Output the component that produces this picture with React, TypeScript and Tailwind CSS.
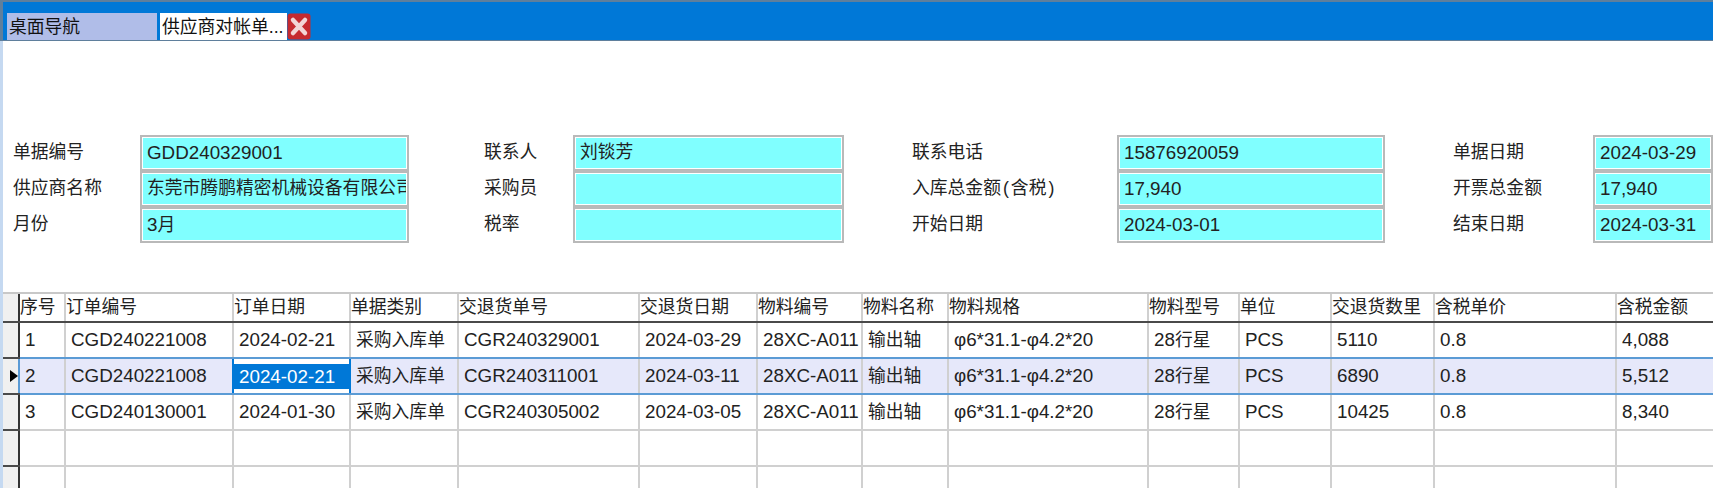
import React from 'react'

const font = { fontFamily: '"Liberation Sans", "Noto Sans CJK SC", sans-serif' }

// form rows: label / value pairs, four across
const formRows = [
    [['单据编号', 'GDD240329001'], ['联系人', '刘锬芳'], ['联系电话', '15876920059'], ['单据日期', '2024-03-29']],
    [['供应商名称', '东莞市腾鹏精密机械设备有限公司'], ['采购员', ''], ['入库总金额(含税)', '17,940'], ['开票总金额', '17,940']],
    [['月份', '3月'], ['税率', ''], ['开始日期', '2024-03-01'], ['结束日期', '2024-03-31']],
]

const columns = ['序号', '订单编号', '订单日期', '单据类别', '交退货单号', '交退货日期', '物料编号', '物料名称', '物料规格', '物料型号', '单位', '交退货数里', '含税单价', '含税金额']
const widths = [46, 168, 117, 108, 181, 118, 105, 86, 200, 91, 92, 103, 182, 97]

const rows = [
    ['1', 'CGD240221008', '2024-02-21', '采购入库单', 'CGR240329001', '2024-03-29', '28XC-A011', '输出轴', 'φ6*31.1-φ4.2*20', '28行星', 'PCS', '5110', '0.8', '4,088'],
    ['2', 'CGD240221008', '2024-02-21', '采购入库单', 'CGR240311001', '2024-03-11', '28XC-A011', '输出轴', 'φ6*31.1-φ4.2*20', '28行星', 'PCS', '6890', '0.8', '5,512'],
    ['3', 'CGD240130001', '2024-01-30', '采购入库单', 'CGR240305002', '2024-03-05', '28XC-A011', '输出轴', 'φ6*31.1-φ4.2*20', '28行星', 'PCS', '10425', '0.8', '8,340'],
    ['', '', '', '', '', '', '', '', '', '', '', '', '', ''],
    ['', '', '', '', '', '', '', '', '', '', '', '', '', ''],
]

// latin runs sit a bit larger than the CJK ones in the original
const Rich = ({ text }: { text: string }) => (
    <>
        {(text.match(/[\u4e00-\u9fff]+|[()]|[^\u4e00-\u9fff()]+/g) || []).map((part, i) => {
            if (/[\u4e00-\u9fff]/.test(part)) return <span key={i} className="text-[17.8px]">{part}</span>
            if (part === '(' || part === ')') return <span key={i} className="px-[2px]">{part}</span>
            return <span key={i} className="text-[18.8px]">{part}</span>
        })}
    </>
)

const CloseIcon = () => (
    <svg width="24" height="27" viewBox="0 0 24 27" className="block">
        <rect x="0.5" y="0.5" width="23" height="26" rx="3" fill="#c62a2f" />
        <path d="M6 7 L18 20 M18 7 L6 20" stroke="#f2d5d6" strokeWidth="4.5" strokeLinecap="round" />
    </svg>
)

const Field = ({ value }: { value: string }) => (
    <div className="h-[36px] border-2 border-[#b9b9b9] bg-[#80ffff] outline outline-1 -outline-offset-3 outline-white px-[5px] leading-[31px] whitespace-nowrap overflow-hidden text-[#222]">
        <Rich text={value} />
    </div>
)

export default function App() {
    return (
        <div className="w-[1713px] h-[488px] overflow-hidden bg-white text-[17.8px] text-[#222]" style={font}>
            {/* title bar with tabs */}
            <div className="h-[41px] bg-[#0078d7] border-t-2 border-b border-l-[3px] border-[#5f7f9c] pt-[11px] pl-[4px] flex items-stretch">
                <div className="w-[150px] bg-[#b0bde8] pl-[2px] leading-[28px] text-[#111]">桌面导航</div>
                <div className="ml-[3px] w-[127px] bg-white pl-[2px] leading-[28px] text-[#111] whitespace-nowrap overflow-hidden">供应商对帐单...</div>
                <CloseIcon />
            </div>

            <div className="border-l-[3px] border-[#c5d9f1] h-[447px] pt-[94px]">
                {/* header form */}
                <div className="grid grid-cols-[137px_269px_75px_89px_271px_68px_205px_268px_68px_140px_1fr]">
                    {formRows.map((row, i) => (
                        <React.Fragment key={i}>
                            <div className="pl-[10px] leading-[34px] whitespace-nowrap"><Rich text={row[0][0]} /></div>
                            <Field value={row[0][1]} />
                            <div />
                            <div className="leading-[34px] whitespace-nowrap"><Rich text={row[1][0]} /></div>
                            <Field value={row[1][1]} />
                            <div />
                            <div className="leading-[34px] whitespace-nowrap"><Rich text={row[2][0]} /></div>
                            <Field value={row[2][1]} />
                            <div />
                            <div className="leading-[34px] whitespace-nowrap"><Rich text={row[3][0]} /></div>
                            <Field value={row[3][1]} />
                        </React.Fragment>
                    ))}
                </div>

                {/* detail grid */}
                <table className="mt-[49px] table-fixed border-collapse w-[1710px]">
                    <colgroup>
                        <col className="w-[16px]" />
                        {widths.map((w, i) => (
                            <col key={i} style={{ width: w }} />
                        ))}
                    </colgroup>
                    <thead>
                        <tr className="h-[29px]">
                            <th className="bg-[#f0f0f0] border-t-2 border-b-2 border-t-[#c8c8c8] border-b-[#4a4a4a]" />
                            {columns.map((c, i) => (
                                <th
                                    key={i}
                                    className={`font-normal text-left whitespace-nowrap overflow-hidden border-t-2 border-b-2 border-t-[#c8c8c8] border-b-[#4a4a4a] px-0 ${i === 0 ? 'border-l-2 border-l-[#333]' : 'border-l-2 border-l-[#d0d0d0]'}`}
                                >
                                    {c}
                                </th>
                            ))}
                        </tr>
                    </thead>
                    <tbody>
                        {rows.map((row, r) => {
                            const selected = r === 1
                            // row above the selected one hands its bottom line over to the blue one
                            const lineClass = selected || r === 0 ? 'border-b-2 border-b-[#5b9bd5]' : 'border-b-2 border-b-[#d0d0d0]'
                            return (
                                <tr key={r} className={`h-[36px] ${selected ? 'bg-[#e6e8fa]' : ''}`}>
                                    <td className="bg-[#f0f0f0] border-b-2 border-[#4a4a4a] p-0">
                                        {selected && <div className="ml-[7px] w-0 h-0 border-y-[6px] border-y-transparent border-l-[8px] border-l-black" />}
                                    </td>
                                    {row.map((cell, i) => {
                                        const active = selected && i === 2
                                        const leftLine = active
                                            ? 'border-l-2 border-l-[#0078d7] border-r-2 border-r-[#0078d7]'
                                            : i === 0
                                              ? selected ? 'border-l-2 border-l-[#5b9bd5]' : 'border-l-2 border-l-[#333]'
                                              : 'border-l-2 border-l-[#d0d0d0]'
                                        return (
                                            <td
                                                key={i}
                                                className={`${lineClass} ${leftLine} whitespace-nowrap overflow-hidden ${active ? 'p-0 bg-white' : 'pl-[5px] pr-0 py-0'}`}
                                            >
                                                {active ? (
                                                    <div className="bg-[#0078d7] text-white pl-[5px] h-[25px] leading-[25px]"><Rich text={cell} /></div>
                                                ) : (
                                                    <Rich text={cell} />
                                                )}
                                            </td>
                                        )
                                    })}
                                </tr>
                            )
                        })}
                    </tbody>
                </table>
            </div>
        </div>
    )
}
